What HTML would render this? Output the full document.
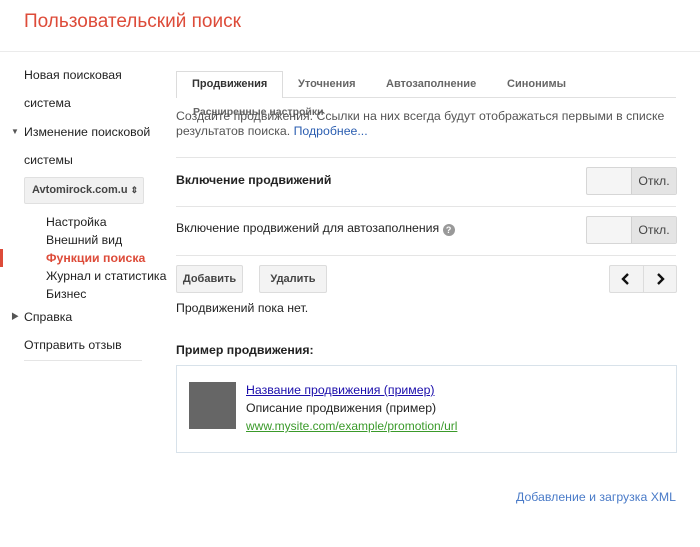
<!DOCTYPE html>
<html><head><meta charset="utf-8"><style>
*{margin:0;padding:0;box-sizing:border-box}
body{width:700px;height:547px;background:#fff;font-family:"Liberation Sans","Noto Sans CJK SC",sans-serif;font-size:12.3px;color:#222;position:relative;overflow:hidden}
.a{position:absolute;white-space:nowrap}
.hr{position:absolute;height:1px;background:#e5e5e5}
.btn{position:absolute;background:#f3f3f3;border:1px solid #dcdcdc;border-radius:2px;font-size:11px;font-weight:bold;color:#444;text-align:center}
.tog{position:absolute;width:91px;height:28px;border:1px solid #d6d6d6;border-radius:2px;background:#f5f5f5}
.tog span{position:absolute;right:0;top:0;width:45px;height:26px;background:#e4e4e4;border-left:1px solid #d0d0d0;line-height:26px;text-align:center;color:#444;font-size:12.3px}
</style></head><body>
<div class="a" style="left:24px;top:11px;font-size:19px;color:#dd4b39">Пользовательский поиск</div>
<div class="hr" style="left:0;top:51px;width:700px;background:#ebebeb"></div>

<div class="a" style="left:24px;top:68px">Новая поисковая</div>
<div class="a" style="left:24px;top:96px">система</div>
<div class="a" style="left:11px;top:127px;font-size:8px;color:#555">▼</div>
<div class="a" style="left:24px;top:125px">Изменение поисковой</div>
<div class="a" style="left:24px;top:153px">системы</div>
<div class="a" style="left:24px;top:177px;width:120px;height:27px;background:#f1f1f1;border:1px solid #e0e0e0;border-radius:2px;font-size:11px;font-weight:bold;color:#444;line-height:25px;padding-left:7px">Avtomirock.com.u <span style="font-size:9px">⇕</span></div>
<div class="a" style="left:46px;top:215px">Настройка</div>
<div class="a" style="left:46px;top:233px">Внешний вид</div>
<div class="a" style="left:0;top:249px;width:3px;height:18px;background:#dd4b39"></div>
<div class="a" style="left:46px;top:251px;color:#dd4b39;font-weight:bold">Функции поиска</div>
<div class="a" style="left:46px;top:269px">Журнал и статистика</div>
<div class="a" style="left:46px;top:287px">Бизнес</div>
<div class="a" style="left:11px;top:311px;font-size:8px;color:#555">▶</div>
<div class="a" style="left:24px;top:310px">Справка</div>
<div class="a" style="left:24px;top:338px">Отправить отзыв</div>
<div class="hr" style="left:24px;top:360px;width:118px"></div>

<div class="hr" style="left:176px;top:97px;width:500px;background:#e0e0e0"></div>
<div class="a" style="left:176px;top:71px;width:107px;height:27px;border:1px solid #dcdcdc;border-bottom:none;background:#fff"></div>
<div class="a" style="left:192px;top:78px;font-size:11px;font-weight:bold;color:#333">Продвижения</div>
<div class="a" style="left:298px;top:78px;font-size:11px;font-weight:bold;color:#666">Уточнения</div>
<div class="a" style="left:386px;top:78px;font-size:11px;font-weight:bold;color:#666">Автозаполнение</div>
<div class="a" style="left:507px;top:78px;font-size:11px;font-weight:bold;color:#666">Синонимы</div>
<div class="a" style="left:193px;top:106px;font-size:10.5px;font-weight:bold;color:#666">Расширенные настройки</div>
<div class="a" style="left:176px;top:109px;color:#555">Создайте продвижения. Ссылки на них всегда будут отображаться первыми в списке</div>
<div class="a" style="left:176px;top:124px;color:#555">результатов поиска. <span style="color:#2a5db0">Подробнее...</span></div>
<div class="hr" style="left:176px;top:157px;width:500px"></div>
<div class="a" style="left:176px;top:173px;font-weight:bold">Включение продвижений</div>
<div class="tog" style="left:586px;top:167px"><span>Откл.</span></div>
<div class="hr" style="left:176px;top:206px;width:500px"></div>
<div class="a" style="left:176px;top:221px">Включение продвижений для автозаполнения <span style="display:inline-block;width:12px;height:12px;border-radius:6px;background:#999;color:#fff;font-size:9px;text-align:center;line-height:12px;font-weight:bold;vertical-align:-1px">?</span></div>
<div class="tog" style="left:586px;top:216px"><span>Откл.</span></div>
<div class="hr" style="left:176px;top:255px;width:500px"></div>
<div class="btn" style="left:176px;top:265px;width:67px;height:28px;line-height:26px">Добавить</div>
<div class="btn" style="left:259px;top:265px;width:68px;height:28px;line-height:26px">Удалить</div>
<div class="btn" style="left:609px;top:265px;width:68px;height:28px"></div>
<div class="a" style="left:643px;top:266px;width:1px;height:26px;background:#dcdcdc"></div>
<svg class="a" style="left:609px;top:265px" width="68" height="28"><path d="M19 9l-5 5 5 5M49 9l5 5-5 5" fill="none" stroke="#111" stroke-width="2.4"/></svg>
<div class="a" style="left:176px;top:301px">Продвижений пока нет.</div>
<div class="a" style="left:176px;top:343px;font-weight:bold">Пример продвижения:</div>
<div class="a" style="left:176px;top:365px;width:501px;height:88px;border:1px solid #d8e2ea"></div>
<div class="a" style="left:189px;top:382px;width:47px;height:47px;background:#666"></div>
<div class="a" style="left:246px;top:383px;color:#1a0dab;text-decoration:underline">Название продвижения (пример)</div>
<div class="a" style="left:246px;top:401px">Описание продвижения (пример)</div>
<div class="a" style="left:246px;top:419px;color:#3a9a2a;text-decoration:underline;font-size:12px">www.mysite.com/example/promotion/url</div>
<div class="a" style="right:24px;top:490px;color:#4a7bc8">Добавление и загрузка XML</div>
</body></html>
